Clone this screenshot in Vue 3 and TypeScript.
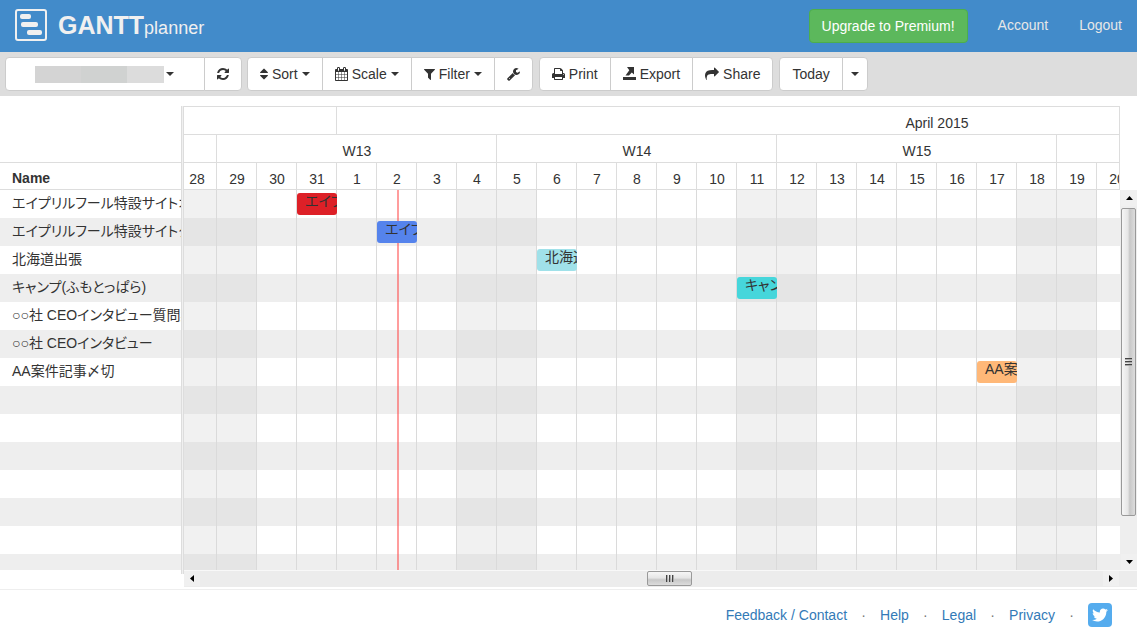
<script setup lang="ts">
interface Task {
  name: string
  day?: number
  color?: string
}
interface Tool {
  icon?: string
  label?: string
  caret?: boolean
  title: string
}
interface Icon {
  box: string
  width: number
  path: string
}

const icons: Record<string, Icon> = {
  refresh: {
    box: '128 0 1536 1792',
    width: 12,
    path: 'M1639 1056q0 5-1 7-64 268-268 434.5t-478 166.5q-146 0-282.5-55t-243.5-157l-129 129q-19 19-45 19t-45-19-19-45v-448q0-26 19-45t45-19h448q26 0 45 19t19 45-19 45l-137 137q71 66 161 102t187 36q134 0 250-65t186-179q11-17 53-117 8-23 30-23h192q13 0 22.5 9.5t9.5 22.5zm25-800v448q0 26-19 45t-45 19h-448q-26 0-45-19t-19-45 19-45l138-138q-148-137-349-137-134 0-250 65t-186 179q-11 17-53 117-8 23-30 23h-199q-13 0-22.5-9.5t-9.5-22.5v-7q65-268 270-434.5t480-166.5q146 0 284 55.5t245 156.5l130-129q19-19 45-19t45 19 19 45z',
  },
  sort: {
    box: '384 0 1024 1792',
    width: 8,
    path: 'M1408 1088q0 26-19 45l-448 448q-19 19-45 19t-45-19l-448-448q-19-19-19-45t19-45 45-19h896q26 0 45 19t19 45zm0-384q0 26-19 45t-45 19h-896q-26 0-45-19t-19-45 19-45l448-448q19-19 45-19t45 19l448 448q19 19 19 45z',
  },
  calendar: {
    box: '64 0 1664 1792',
    width: 13,
    path: 'M192 1664h288v-288h-288v288zm352 0h320v-288h-320v288zm-352-352h288v-320h-288v320zm352 0h320v-320h-320v320zm-352-384h288v-288h-288v288zm736 736h320v-288h-320v288zm-384-736h320v-288h-320v288zm768 736h288v-288h-288v288zm-384-352h320v-320h-320v320zm-352-864v-288q0-13-9.5-22.5t-22.5-9.5h-64q-13 0-22.5 9.5t-9.5 22.5v288q0 13 9.5 22.5t22.5 9.5h64q13 0 22.5-9.5t9.5-22.5zm736 864h288v-320h-288v320zm-384-384h320v-288h-320v288zm384 0h288v-288h-288v288zm32-480v-288q0-13-9.5-22.5t-22.5-9.5h-64q-13 0-22.5 9.5t-9.5 22.5v288q0 13 9.5 22.5t22.5 9.5h64q13 0 22.5-9.5t9.5-22.5zm384-64v1280q0 52-38 90t-90 38h-1408q-52 0-90-38t-38-90v-1280q0-52 38-90t90-38h128v-96q0-66 47-113t113-47h64q66 0 113 47t47 113v96h384v-96q0-66 47-113t113-47h64q66 0 113 47t47 113v96h128q52 0 90 38t38 90z',
  },
  filter: {
    box: '192 0 1408 1792',
    width: 11,
    path: 'M1595 295q17 41-14 70l-493 493v742q0 42-39 59-13 5-25 5-27 0-45-19l-256-256q-19-19-19-45v-486l-493-493q-31-29-14-70 17-39 59-39h1280q42 0 59 39z',
  },
  wrench: {
    box: '64 0 1664 1792',
    width: 13,
    path: 'M448 1472q0-26-19-45t-45-19-45 19-19 45 19 45 45 19 45-19 19-45zm644-420l-682 682q-37 37-90 37-52 0-91-37l-106-108q-38-36-38-90 0-53 38-91l681-681q39 98 114.5 173.5t173.5 114.5zm634-435q0 39-23 106-47 134-164.5 217.5t-258.5 83.5q-185 0-316.5-131.5t-131.5-316.5 131.5-316.5 316.5-131.5q58 0 121.5 16.5t107.5 46.5q16 11 16 28t-16 28l-293 169v224l193 107q5-3 79-48.5t135.5-81 70.5-35.5q15 0 23.5 10t8.5 25z',
  },
  print: {
    box: '64 0 1664 1792',
    width: 13,
    path: 'M448 1536h896v-256h-896v256zm0-640h896v-384h-160q-40 0-68-28t-28-68v-160h-640v640zm1152 64q0-26-19-45t-45-19-45 19-19 45 19 45 45 19 45-19 19-45zm128 0v416q0 13-9.5 22.5t-22.5 9.5h-224v160q0 40-28 68t-68 28h-960q-40 0-68-28t-28-68v-160h-224q-13 0-22.5-9.5t-9.5-22.5v-416q0-79 56.5-135.5t135.5-56.5h64v-544q0-40 28-68t68-28h672q40 0 88 20t76 48l152 152q28 28 48 76t20 88v256h64q79 0 135.5 56.5t56.5 135.5z',
  },
  export: {
    box: '0 0 13 14',
    width: 13,
    path: 'M0 10H13V13H0zM4 0H11V7.500L8.800 5.500L6 8.500H2.500L6.300 3.300z',
  },
  share: {
    box: '0 0 1792 1792',
    width: 14,
    path: 'M1792 640q0 26-19 45l-512 512q-19 19-45 19t-45-19-19-45v-256h-224q-98 0-175.5 6t-154 21.5-133 42.5-105.5 69.5-80 101-48.5 138.5-17.5 181q0 55 5 123 0 6 2.5 23.5t2.5 26.5q0 15-8.5 25t-23.5 10q-16 0-28-17-7-9-13-22t-13.5-30-10.5-24q-127-285-127-451 0-199 53-333 162-403 875-403h224v-256q0-26 19-45t45-19 45 19l512 512q19 19 19 45z',
  },
}

const toolGroups: Tool[][] = [
  [
    { icon: 'sort', label: 'Sort', caret: true, title: 'Sort' },
    { icon: 'calendar', label: 'Scale', caret: true, title: 'Scale' },
    { icon: 'filter', label: 'Filter', caret: true, title: 'Filter' },
    { icon: 'wrench', title: 'Settings' },
  ],
  [
    { icon: 'print', label: 'Print', title: 'Print' },
    { icon: 'export', label: 'Export', title: 'Export' },
    { icon: 'share', label: 'Share', title: 'Share' },
  ],
  [
    { label: 'Today', title: 'Today' },
    { caret: true, title: 'Jump to date' },
  ],
]

// Day 0 is Saturday, March 28
const days = Array.from({ length: 34 }, (_, i) => ({
  label: i < 4 ? 28 + i : i - 3,
  weekend: i % 7 < 2,
}))
const weeks = [
  { label: '', span: 1 },
  { label: 'W13', span: 7 },
  { label: 'W14', span: 7 },
  { label: 'W15', span: 7 },
  { label: '', span: 12 },
]
const months = [
  { label: '', span: 4 },
  { label: 'April 2015', span: 30 },
]

const tasks: Task[] = [
  { name: 'エイプリルフール特設サイトオープン', day: 3, color: '#dd2027' },
  { name: 'エイプリルフール特設サイトクローズ', day: 5, color: '#5583ec' },
  { name: '北海道出張', day: 9, color: '#a0e1e9' },
  { name: 'キャンプ(ふもとっぱら)', day: 14, color: '#46d6db' },
  { name: '○○社 CEOインタビュー質問案' },
  { name: '○○社 CEOインタビュー' },
  { name: 'AA案件記事〆切', day: 20, color: '#ffb878' },
]

const footerLinks = ['Feedback / Contact', 'Help', 'Legal', 'Privacy']
</script>

<template>
  <div class="page">
    <header class="navbar">
      <a class="brand" href="#">
        <svg width="32" height="32" viewBox="0 0 32 32" aria-hidden="true">
          <rect x="1" y="1" width="30" height="30" rx="2" fill="none" stroke="#f0f0f0" stroke-width="2" />
          <g fill="#f0f0f0">
            <rect x="5" y="5" width="11" height="5" rx="2" />
            <rect x="6" y="13" width="17" height="5" rx="2" />
            <rect x="12" y="21" width="15" height="5" rx="2" />
          </g>
        </svg>
        <span class="brand-name"><strong>GANTT</strong>planner</span>
      </a>
      <nav class="nav">
        <button class="upgrade" type="button">Upgrade to Premium!</button>
        <a href="#">Account</a>
        <a href="#">Logout</a>
      </nav>
    </header>

    <div class="toolbar">
      <div class="group">
        <button class="tool project" type="button" aria-label="Project">
          <span class="masked"><i></i><i></i><i></i></span>
          <span class="caret"></span>
        </button>
        <button class="tool" type="button" aria-label="Refresh">
          <svg :width="icons.refresh.width" height="14" :viewBox="icons.refresh.box"><path :d="icons.refresh.path" /></svg>
        </button>
      </div>
      <div v-for="(group, g) in toolGroups" :key="g" class="group">
        <button
          v-for="tool in group"
          :key="tool.title"
          class="tool"
          :class="{ narrow: !tool.icon && !tool.label }"
          type="button"
          :aria-label="tool.title"
        >
          <svg v-if="tool.icon" :width="icons[tool.icon].width" height="14" :viewBox="icons[tool.icon].box">
            <path :d="icons[tool.icon].path" />
          </svg>
          <span v-if="tool.label">{{ tool.label }}</span>
          <span v-if="tool.caret" class="caret"></span>
        </button>
      </div>
    </div>

    <main class="chart">
      <div class="names">
        <table>
          <thead>
            <tr class="spacer"><td></td></tr>
            <tr><th scope="col">Name</th></tr>
          </thead>
          <tbody>
            <tr v-for="task in tasks" :key="task.name"><td>{{ task.name }}</td></tr>
          </tbody>
        </table>
      </div>
      <div class="splitter"></div>
      <div class="timeline">
        <div class="scale">
          <div class="strip">
            <div v-for="(m, i) in months" :key="i" class="cell" :style="{ width: m.span * 40 + 'px' }">{{ m.label }}</div>
          </div>
          <div class="strip">
            <div v-for="(w, i) in weeks" :key="i" class="cell" :style="{ width: w.span * 40 + 'px' }">{{ w.label }}</div>
          </div>
          <div class="strip days">
            <div v-for="(d, i) in days" :key="i" class="cell day">{{ d.label }}</div>
          </div>
        </div>
        <div class="body">
          <div class="canvas">
            <div class="columns">
              <div v-for="(d, i) in days" :key="i" class="column" :class="{ weekend: d.weekend }"></div>
            </div>
            <div class="today"></div>
            <div class="lanes">
              <div v-for="task in tasks" :key="task.name" class="lane">
                <div
                  v-if="task.day !== undefined"
                  class="bar"
                  :style="{ marginLeft: task.day * 40 + 'px', backgroundColor: task.color }"
                >{{ task.name }}</div>
              </div>
            </div>
          </div>
        </div>
        <div class="vscroll">
          <button class="arrow" type="button" aria-label="Scroll up"><svg width="7" height="4" viewBox="0 0 7 4"><path d="M0 4L3.500 0L7 4z" /></svg></button>
          <div class="vtrack"><div class="vthumb"><i></i><i></i><i></i></div></div>
          <button class="arrow" type="button" aria-label="Scroll down"><svg width="7" height="4" viewBox="0 0 7 4"><path d="M0 0L3.500 4L7 0z" /></svg></button>
        </div>
        <div class="hscroll">
          <button class="arrow" type="button" aria-label="Scroll left"><svg width="4" height="7" viewBox="0 0 4 7"><path d="M4 0L0 3.500L4 7z" /></svg></button>
          <div class="htrack"><div class="hthumb"><i></i><i></i><i></i></div></div>
          <button class="arrow" type="button" aria-label="Scroll right"><svg width="4" height="7" viewBox="0 0 4 7"><path d="M0 0L4 3.500L0 7z" /></svg></button>
        </div>
      </div>
    </main>

    <footer class="footer">
      <template v-for="link in footerLinks" :key="link">
        <a href="#">{{ link }}</a>
        <span class="dot">·</span>
      </template>
      <a class="twitter" href="#" aria-label="Twitter">
        <svg width="18" height="18" viewBox="0 0 1792 1792">
          <path d="M1684 408q-67 98-162 167 1 14 1 42 0 130-38 259.500t-115.500 248.500-184.500 210.500-258 146-323 54.500q-271 0-496-145 35 4 78 4 225 0 401-138-105-2-188-64.500t-114-159.500q33 5 61 5 43 0 85-11-112-23-185.500-111.500t-73.500-205.500v-4q68 38 146 41-66-44-105-115t-39-154q0-88 44-163 121 149 294.500 238.500t371.500 99.500q-8-38-8-74 0-134 94.500-228.500t228.500-94.500q140 0 236 102 109-21 205-78-37 115-142 178 93-10 186-50z" />
        </svg>
      </a>
    </footer>
  </div>
</template>

<style>
body {
  margin: 0;
  background: #fff;
}
</style>

<style scoped>
.page {
  display: flex;
  flex-direction: column;
  height: 100vh;
  font-family: "Liberation Sans", "Noto Sans CJK JP", sans-serif;
  font-size: 14px;
  line-height: 20px;
  color: #333;
  overflow: hidden;
}
.page * {
  box-sizing: border-box;
}
button {
  font: inherit;
  color: inherit;
  margin: 0;
}
a {
  text-decoration: none;
}

.navbar {
  display: flex;
  justify-content: space-between;
  flex: none;
  height: 52px;
  background: #428bca;
}
.brand {
  display: flex;
  align-items: center;
  gap: 11px;
  padding-left: 15px;
  padding-bottom: 2px;
  color: #f0f0f0;
}
.brand-name {
  padding-top: 2px;
  font-size: 18px;
}
.brand-name strong {
  font-size: 25px;
}
.nav {
  display: flex;
  align-items: center;
  gap: 1px;
}
.nav a {
  padding: 0 15px 2px;
  color: #e7e7e7;
}
.upgrade {
  height: 34px;
  margin-right: 14px;
  padding: 0 12px;
  border: 1px solid #4cae4c;
  border-radius: 4px;
  background: #5cb85c;
  color: #fff;
}

.toolbar {
  display: flex;
  flex: none;
  gap: 5px;
  padding: 5px;
  background: #ddd;
}
.group {
  display: flex;
}
.group + .group + .group {
  margin-left: 1px;
}
.tool {
  display: flex;
  align-items: center;
  justify-content: center;
  gap: 4px;
  height: 34px;
  padding: 0 12px;
  border: 1px solid #ccc;
  background: #fff;
  white-space: nowrap;
}
.tool + .tool {
  margin-left: -1px;
}
.tool:first-child {
  border-radius: 4px 0 0 4px;
}
.tool:last-child {
  border-radius: 0 4px 4px 0;
}
.tool svg {
  fill: #333;
}
.narrow {
  padding: 0 8px;
}
.project {
  width: 200px;
  justify-content: flex-start;
  gap: 2px;
  padding-left: 29px;
}
.masked {
  display: flex;
  height: 17px;
}
.masked i {
  width: 46px;
  background: #d4d4d4;
}
.masked i:nth-child(2) {
  background: #d0d2d1;
}
.masked i:nth-child(3) {
  width: 37px;
  background: #dcdcdc;
}
.caret {
  border: 4px solid transparent;
  border-top-color: #333;
  border-bottom: 0;
}

.chart {
  display: flex;
  flex: 1;
  min-height: 0;
  padding: 10px 0 2px;
}
.names {
  flex: none;
  width: 181px;
  margin-bottom: 17px;
  overflow: hidden;
  background: repeating-linear-gradient(#fff 0 28px, #eee 28px 56px) 0 84px no-repeat;
}
.names table {
  width: 100%;
  table-layout: fixed;
  border-collapse: collapse;
}
.names td,
.names th {
  height: 28px;
  padding: 0 0 0 12px;
  overflow: hidden;
  text-align: left;
  white-space: nowrap;
  font-feature-settings: "palt";
}
.names .spacer td {
  height: 56px;
}
.names thead td,
.names thead th {
  border-bottom: 1px solid #ddd;
}
.names thead th {
  height: 27px;
  padding-top: 4px;
}
.splitter {
  flex: none;
  width: 3px;
  margin-bottom: 13px;
  border: solid #ddd;
  border-width: 0 1px;
  background: #f0f0f0;
}
.timeline {
  display: grid;
  flex: 1;
  min-width: 0;
  grid-template: auto minmax(0, 1fr) 17px / minmax(0, 1fr) 17px;
}
.scale {
  overflow: hidden;
  border: solid #ddd;
  border-width: 1px 1px 0 0;
}
.strip {
  display: flex;
  width: max-content;
  margin-left: -7px;
  border-bottom: 1px solid #ddd;
}
.cell {
  flex: none;
  height: 27px;
  padding: 6px 0 0 1px;
  border-right: 1px solid #ddd;
  text-align: center;
}
.day {
  width: 40px;
}
.days .cell {
  height: 26px;
}
.body {
  grid-column: 1;
  overflow: hidden;
  background: repeating-linear-gradient(#fff 0 28px, #eee 28px 56px);
}
.canvas {
  position: relative;
  height: 100%;
  margin-left: -7px;
}
.columns {
  position: absolute;
  inset: 0;
  display: flex;
}
.column {
  flex: none;
  width: 40px;
  border-right: 1px solid #dadada;
}
.weekend {
  background: rgba(207, 207, 207, 0.29);
}
.today {
  position: absolute;
  top: 0;
  bottom: 0;
  left: 220px;
  width: 2px;
  background: rgba(255, 60, 60, 0.5);
}
.lanes {
  position: relative;
}
.lane {
  height: 28px;
  padding-top: 3px;
}
.bar {
  width: 40px;
  height: 22px;
  padding-left: 8px;
  border-radius: 3px;
  overflow: hidden;
  line-height: 16px;
  white-space: nowrap;
  font-feature-settings: "palt";
}

.arrow {
  display: flex;
  align-items: center;
  justify-content: center;
  flex: none;
  width: 16px;
  height: 16px;
  padding: 0;
  border: 0;
  background: #f0f0f0;
}
.vscroll {
  grid-area: 2 / 2;
  display: flex;
  flex-direction: column;
  align-items: flex-end;
  background: #eee;
}
.vtrack {
  flex: 1;
  width: 16px;
  padding-top: 2px;
}
.vthumb {
  display: flex;
  flex-direction: column;
  align-items: center;
  justify-content: center;
  gap: 1px;
  width: 15px;
  height: 89%;
  border: 1px solid #999;
  border-radius: 2px;
  background: linear-gradient(90deg, #f6f6f6, #e6e6e6 45%, #c8c8c8 60%, #dcdcdc);
}
.vthumb i {
  width: 7px;
  height: 2px;
  border-top: 1px solid #444;
  background: #aaa;
}
.hscroll {
  grid-area: 3 / 1 / auto / span 2;
  display: flex;
  align-items: flex-start;
  padding-right: 18px;
  border-top: 1px solid #f8f8f8;
  background: #ececec;
}
.hscroll .arrow {
  height: 15px;
}
.htrack {
  display: flex;
  flex: 1;
  justify-content: center;
}
.hthumb {
  display: flex;
  align-items: center;
  justify-content: center;
  gap: 1px;
  width: 45px;
  height: 15px;
  margin-left: 36px;
  border: 1px solid #999;
  border-radius: 2px;
  background: linear-gradient(#f6f6f6, #e6e6e6 45%, #c8c8c8 60%, #dcdcdc);
}
.hthumb i {
  width: 2px;
  height: 7px;
  border-left: 1px solid #444;
  background: #aaa;
}

.footer {
  display: flex;
  flex: none;
  align-items: center;
  justify-content: flex-end;
  height: 50px;
  padding-right: 25px;
  border-top: 1px solid #eee;
}
.footer a {
  color: #337ab7;
}
.dot {
  width: 33px;
  text-align: center;
  color: #777;
}
.footer .twitter {
  display: flex;
  align-items: center;
  justify-content: center;
  width: 24px;
  height: 24px;
  border-radius: 4px;
  background: #55acee;
}
.twitter svg {
  fill: #fff;
}
</style>
